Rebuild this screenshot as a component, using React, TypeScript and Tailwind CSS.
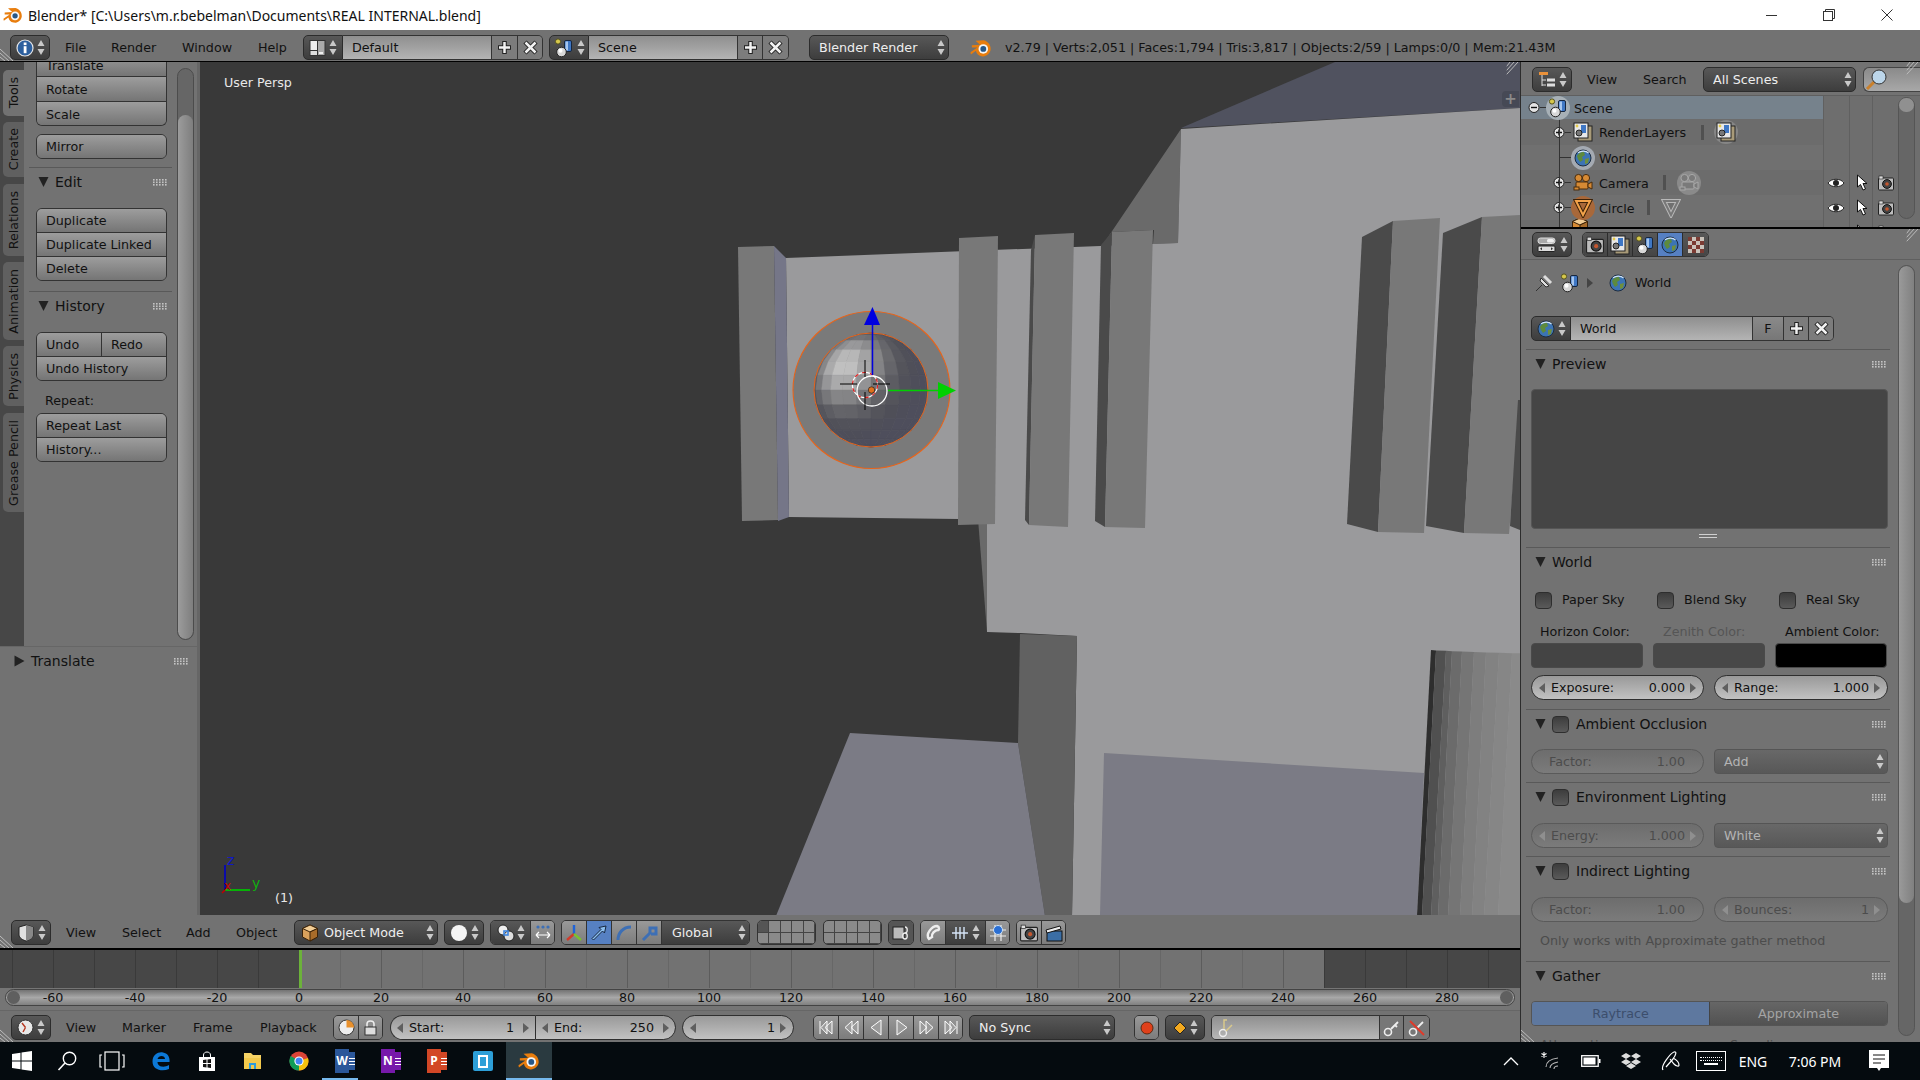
import React from 'react';

const UpDown = ({ c = '#c9c9c9' }: { c?: string }) => (
  <svg width="8" height="17" viewBox="0 0 8 17" className="shrink-0">
    <path d="M4 1L7.5 7H.5Z M4 16L.5 10H7.5Z" fill={c} />
  </svg>
);

const Tri = ({ open = true }: { open?: boolean }) => (
  <svg width="11" height="12" viewBox="0 0 11 12" className="shrink-0">
    {open ? <path d="M.5 1H10.5L5.5 11Z" fill="#222" /> : <path d="M.5 .5L10.5 6L.5 11.5Z" fill="#222" />}
  </svg>
);

const Grip = () => (
  <svg width="15" height="8" viewBox="0 0 15 8" className="shrink-0">
    {[0, 3, 6, 9, 12].map((x) =>
      [1, 3.5, 6].map((y) => <rect key={x + '-' + y} x={x} y={y} width="1.6" height="1.6" fill="#c4c4c4" />)
    )}
  </svg>
);

const Hatch = ({ className, flip }: { className: string; flip?: boolean }) => (
  <svg width="14" height="13" viewBox="0 0 14 13" className={className}>
    <g transform={flip ? 'translate(14 0) scale(-1 1)' : undefined} stroke="#bdbdbd" strokeWidth="1">
      <path d="M0 1L13 13M0 5L9 13M0 9L5 13" />
    </g>
  </svg>
);

const PlusIcon = () => (
  <svg width="17" height="17" viewBox="0 0 17 17">
    <path d="M8.5 2V15M2 8.5H15" stroke="#222" strokeWidth="4.5" />
    <path d="M8.5 3V14M3 8.5H14" stroke="#f2f2f2" strokeWidth="2.5" />
  </svg>
);

const XIcon = () => (
  <svg width="17" height="17" viewBox="0 0 17 17">
    <path d="M3 3L14 14M14 3L3 14" stroke="#222" strokeWidth="4.5" />
    <path d="M3.5 3.5L13.5 13.5M13.5 3.5L3.5 13.5" stroke="#f2f2f2" strokeWidth="2.5" />
  </svg>
);

const InfoIcon = () => (
  <svg width="18" height="18" viewBox="0 0 18 18">
    <circle cx="9" cy="9" r="8" fill="#2c5f9e" stroke="#e6e6e6" strokeWidth="1.2" />
    <rect x="7.7" y="3.5" width="2.8" height="2.6" fill="#fff" />
    <rect x="7.7" y="7.2" width="2.8" height="7" fill="#fff" />
  </svg>
);

const LayoutIcon = () => (
  <svg width="17" height="18" viewBox="0 0 17 18">
    <rect x=".5" y="1" width="16" height="16" fill="#333" />
    <rect x="1.5" y="2" width="6.5" height="9" fill="#eee" />
    <rect x="1.5" y="12" width="6.5" height="4" fill="#ddd" />
    <rect x="9" y="2" width="6.5" height="14" fill="#aaa" />
    <rect x="10" y="13" width="4" height="2" fill="#eee" />
  </svg>
);

const SceneIcon = () => (
  <svg width="20" height="20" viewBox="0 0 20 20">
    <circle cx="4" cy="3.5" r="2.6" fill="#d6c84c" stroke="#55521f" />
    <rect x="10.5" y="2.5" width="7" height="11" rx="1.5" fill="#3f77c4" stroke="#16263f" />
    <rect x="11.5" y="3.5" width="2.5" height="9" fill="#a6c6ee" />
    <circle cx="7.5" cy="14" r="4.8" fill="#d8d8d8" stroke="#222" />
    <circle cx="6.5" cy="12.8" r="2" fill="#fff" />
  </svg>
);

const WorldIcon = ({ s = 18 }: { s?: number }) => (
  <svg width={s} height={s} viewBox="0 0 18 18">
    <circle cx="9" cy="9" r="8" fill="#3c74b4" stroke="#1c2c40" />
    <path d="M3 7C5 3 8 3 10 3L11 6L8 8L9 11L6 13L4 10Z" fill="#5d8a3d" />
    <path d="M11 10L15 9L14 14L11 15Z" fill="#6f8f3e" />
    <path d="M4 3.8C7 1.5 12 1.5 14.5 4" stroke="#cfe2f5" strokeWidth="1.2" fill="none" />
  </svg>
);

const RenderLayersIcon = () => (
  <svg width="20" height="20" viewBox="0 0 20 20">
    <rect x="5" y="4" width="14" height="15" fill="#a89a78" stroke="#222" />
    <rect x="1" y="1" width="14" height="15" fill="#e8e8e8" stroke="#222" />
    <rect x="8" y="3" width="5" height="8" fill="#3f77c4" />
    <circle cx="6" cy="11" r="3" fill="#777" stroke="#222" />
    <circle cx="4" cy="4" r="1.4" fill="#e5c94a" />
  </svg>
);

const CameraDataIcon = ({ c = '#d68a34', d = '#4a2c0c' }: { c?: string; d?: string }) => (
  <svg width="20" height="20" viewBox="0 0 20 20">
    <circle cx="5.5" cy="5" r="3.6" fill={c} stroke={d} />
    <circle cx="13" cy="5" r="3.6" fill={c} stroke={d} />
    <rect x="3" y="9" width="12" height="7" rx="1" fill={c} stroke={d} />
    <path d="M15 11L19 9V16L15 14Z" fill={c} stroke={d} />
    <rect x="1" y="14" width="5" height="3" fill={c} stroke={d} />
  </svg>
);

const MeshIcon = ({ c = '#f2a24a', d = '#3d2208' }: { c?: string; d?: string }) => (
  <svg width="20" height="20" viewBox="0 0 20 20">
    <path d="M3 3H17L10 17Z" fill="none" stroke={d} strokeWidth="4" />
    <path d="M3 3H17L10 17Z" fill="none" stroke={c} strokeWidth="2" />
  </svg>
);

const EyeIcon = () => (
  <svg width="18" height="12" viewBox="0 0 18 12">
    <path d="M1 6C4 1 14 1 17 6C14 11 4 11 1 6Z" fill="#fff" stroke="#222" />
    <circle cx="9" cy="6" r="3" fill="#222" />
  </svg>
);

const CursorIcon = () => (
  <svg width="13" height="17" viewBox="0 0 13 17">
    <path d="M1.5 1V13L4.5 10.5L7 16L9.5 15L7 9.5H11Z" fill="#fff" stroke="#111" />
  </svg>
);

const RenderCamIcon = ({ s = 16 }: { s?: number }) => (
  <svg width={s} height={s} viewBox="0 0 16 16">
    <rect x=".5" y="3" width="15" height="12" rx="1" fill="#bdbdbd" stroke="#222" />
    <rect x="1" y="1" width="4" height="3" fill="#ddd" stroke="#222" strokeWidth=".6" />
    <circle cx="9" cy="9" r="4.4" fill="#444" stroke="#111" />
    <circle cx="9" cy="9" r="1.8" fill="#c5572f" />
  </svg>
);

const CubeIcon = ({ c = '#d9a15c', d = '#3a2208' }: { c?: string; d?: string }) => (
  <svg width="18" height="18" viewBox="0 0 18 18">
    <path d="M9 1L16.5 4.5V13L9 17L1.5 13V4.5Z" fill={c} stroke={d} />
    <path d="M1.5 4.5L9 8L16.5 4.5L9 1Z" fill="#f2cd95" stroke={d} />
    <path d="M9 8V17L16.5 13V4.5Z" fill="#a86c2a" stroke={d} />
  </svg>
);

const ViewCubeIcon = () => (
  <svg width="18" height="18" viewBox="0 0 18 18">
    <path d="M9 1L16 3V11C16 14 12 16 9 17C6 16 2 14 2 11V3Z" fill="#e0e0e0" stroke="#222" />
    <path d="M9 1V17C12 16 16 14 16 11V3Z" fill="#888" />
  </svg>
);

const OutlinerIcon = () => (
  <svg width="18" height="18" viewBox="0 0 18 18">
    <rect x="1" y="1" width="9" height="3" fill="#e9913a" />
    <path d="M4 4V15M4 9H8M4 14H8" stroke="#ddd" fill="none" />
    <rect x="9" y="7.5" width="8" height="3" fill="#ddd" />
    <rect x="9" y="12.5" width="8" height="3" fill="#ddd" />
  </svg>
);

const PropsIcon = () => (
  <svg width="20" height="18" viewBox="0 0 20 18">
    <rect x="1" y="2" width="17" height="5.5" rx="2.5" fill="#aaa" stroke="#ddd" />
    <rect x="10" y="3" width="7" height="3.5" rx="1.5" fill="#eee" />
    <rect x="1" y="10" width="17" height="5.5" rx="1" fill="#ddd" stroke="#222" />
    <path d="M3 12.7L5 11.2V14.2ZM16 12.7L14 11.2V14.2Z" fill="#333" />
  </svg>
);

const CheckerIcon = () => (
  <svg width="16" height="16" viewBox="0 0 16 16">
    <rect width="16" height="16" fill="#c9c2ba" />
    {[0, 1, 2, 3].map((r) =>
      [0, 1, 2, 3].map((c) =>
        (r + c) % 2 === 0 ? <rect key={r + '' + c} x={c * 4} y={r * 4} width="4" height="4" fill="#7b3b33" /> : null
      )
    )}
  </svg>
);

const ClockIcon = () => (
  <svg width="17" height="17" viewBox="0 0 17 17">
    <circle cx="8.5" cy="8.5" r="7.5" fill="#e8e8e8" stroke="#333" />
    <path d="M8.5 8.5L5 4M8.5 8.5L6 13" stroke="#b5361f" strokeWidth="1.4" />
  </svg>
);

const BlenderLogo = ({ s = 24 }: { s?: number }) => (
  <svg width={s} height={s} viewBox="0 0 24 24">
    <path d="M6 4L15 3.5C20 5 23 9 22.5 14C21.5 19 17 22 12.5 21C9 20.5 7 18 6.5 15L1 19L.5 16.5L8 11.5L2 11.5L2 9L11 8.5Z" fill="#e87d0d" />
    <circle cx="14.5" cy="13" r="5.2" fill="#f6f6f6" />
    <circle cx="14.5" cy="13" r="3.2" fill="#265787" />
  </svg>
);

const IconDrop = ({ children, round = 'rounded-[5px]' }: { children: React.ReactNode; round?: string }) => (
  <div className={'flex h-[25px] w-10 shrink-0 items-center justify-center gap-[3px] border border-[#2c2c2c] bg-linear-to-b from-[#585858] to-[#3d3d3d] ' + round}>
    {children}
    <UpDown />
  </div>
);

const TextDrop = ({ w, label, icon }: { w: string; label: string; icon?: React.ReactNode }) => (
  <div className={'flex h-[25px] shrink-0 items-center rounded-[5px] border border-[#2c2c2c] bg-linear-to-b from-[#585858] to-[#3d3d3d] pr-[3px] pl-[9px] text-[#eee] ' + w}>
    {icon}
    <span className="flex-1 truncate">{label}</span>
    <UpDown />
  </div>
);

const Menu = ({ w, label }: { w: string; label: string }) => (
  <div className={'h-[25px] shrink-0 leading-[25px] text-[#111] ' + w}>{label}</div>
);

const Cell = ({ children, w = 'w-[25px]', last }: { children?: React.ReactNode; w?: string; last?: boolean }) => (
  <div className={'flex h-full shrink-0 items-center justify-center bg-linear-to-b from-[#999] to-[#7c7c7c] ' + (last ? 'w-[23px]' : w + ' border-r border-[#333]')}>
    {children}
  </div>
);

const Group = ({ children, className = '' }: { children: React.ReactNode; className?: string }) => (
  <div className={'flex h-[25px] shrink-0 overflow-hidden rounded-[5px] border border-[#333] ' + className}>{children}</div>
);

const BtnStack = ({ rows, className = '' }: { rows: string[][]; className?: string }) => (
  <div className={'w-[131px] overflow-hidden rounded-[6px] border border-[#333] ' + className}>
    {rows.map((r, i) => (
      <div key={i} className={'flex ' + (i ? 'h-[24px] border-t border-[#333]' : 'h-[23px]')}>
        {r.map((t, j) => (
          <div key={t} className={'flex-1 bg-linear-to-b from-[#9d9d9d] to-[#757575] pl-[9px] leading-[23px] text-[#111] ' + (j ? 'border-l border-[#333]' : '')}>
            {t}
          </div>
        ))}
      </div>
    ))}
  </div>
);

const NumArrow = ({ left, c }: { left?: boolean; c: string }) => (
  <svg width="6" height="10" viewBox="0 0 6 10" className="shrink-0">
    <path d={left ? 'M6 0L0 5L6 10Z' : 'M0 0L6 5L0 10Z'} fill={c} />
  </svg>
);

const Num = ({ label, value, off, slider, w = 'w-[174px]' }: { label: string; value: string; off?: boolean; slider?: boolean; w?: string }) => (
  <div
    className={
      'flex h-[25px] shrink-0 items-center rounded-full border px-[7px] ' + w + ' ' +
      (off
        ? 'border-[#5a5a5a] bg-linear-to-b from-[#6d6d6d] to-[#7b7b7b] text-[#4c4c4c]'
        : 'border-[#2f2f2f] bg-linear-to-b from-[#999] to-[#c2c2c2] text-[#111]')
    }
  >
    {slider ? <span className="w-[6px]" /> : <NumArrow left c={off ? '#8f8f8f' : '#5f5f5f'} />}
    <span className={'flex-1 ' + (slider ? 'pl-[4px]' : 'pl-[6px]')}>{label}</span>
    <span className="pr-[5px]">{value}</span>
    {slider ? <span className="w-[6px]" /> : <NumArrow c={off ? '#8f8f8f' : '#5f5f5f'} />}
  </div>
);

const Check = () => (
  <div className="h-[17px] w-[17px] shrink-0 rounded-[4px] border border-[#2e2e2e] bg-linear-to-b from-[#3d3d3d] to-[#5a5a5a]" />
);

const PanelHead = ({ label, check }: { label: string; check?: boolean }) => (
  <div className="flex h-[28px] items-center pr-[8px] pl-[14px] text-[14px] text-[#111]">
    <Tri />
    {check ? <div className="ml-[6px] mr-[7px]"><Check /></div> : <span className="w-[6px]" />}
    <span className="flex-1">{label}</span>
    <Grip />
  </div>
);

const Line = ({ className = '' }: { className?: string }) => <div className={'mx-[5px] h-px bg-[#595959] ' + className} />;

function sphereFacets() {
  const out: { d: string; fill: string }[] = [];
  const n = 12;
  const L = [-0.46, -0.44, 0.77];
  const pt = (lat: number, lon: number) => [
    Math.cos(lat) * Math.sin(lon),
    Math.sin(lat),
    Math.cos(lat) * Math.cos(lon),
  ];
  for (let i = 0; i < n; i++) {
    for (let j = 0; j < n; j++) {
      const a0 = -Math.PI / 2 + (i * Math.PI) / n;
      const a1 = a0 + Math.PI / n;
      const b0 = -Math.PI / 2 + (j * Math.PI) / n;
      const b1 = b0 + Math.PI / n;
      const nn = pt((a0 + a1) / 2, (b0 + b1) / 2);
      const s = Math.max(0, nn[0] * L[0] + nn[1] * L[1] + nn[2] * L[2]);
      const g = Math.round(78 + 118 * Math.pow(s, 4));
      const fill = `rgb(${g},${g},${g + Math.round(14 * (1 - s))})`;
      const d =
        'M' +
        [pt(a0, b0), pt(a0, b1), pt(a1, b1), pt(a1, b0)]
          .map((p) => `${(871 + p[0] * 57).toFixed(1)} ${(390 + p[1] * 57).toFixed(1)}`)
          .join('L') +
        'Z';
      out.push({ d, fill });
    }
  }
  return out;
}

const FRONT = '#787878';
const SIDE = '#4a4a4a';
const LIT = '#9a9a9c';
const FLOOR = '#7b7b85';
const STRIPES = ['#2e2e2e', '#505050', '#5f5f5f', '#6b6b6b', '#757575', '#7d7d7d', '#828282', '#868686', '#8a8a8a'];
const STRIPE_TOP = [1431, 1436, 1446, 1452, 1462, 1474, 1486, 1499, 1512, 1534];
const STRIPE_BOT = [1417, 1422, 1431, 1438, 1448, 1460, 1472, 1484, 1498, 1520];

const Scene3D = () => (
  <svg width="1320" height="853" viewBox="200 62 1320 853" className="block">
    <rect x="200" y="62" width="1320" height="853" fill="#393939" />
    <polygon points="1335,62 1520,62 1520,108 1181,128" fill="#50525f" />
    <polygon points="1181,129 1178,243 1153,244 1154,230 1112,232 1102,246" fill="#6a6a6a" />
    <polygon points="978,519 987,519 987,632" fill="#6a6a6a" />
    <polygon points="1181,129 1520,108 1520,916 1072,916 1077,636 1020,633 987,632 987,520 959,519 789,517 786,258 1178,243" fill={LIT} />
    <polygon points="1020,634 1077,636 1072,916 1045,916 1018,743" fill="#616161" />
    <polygon points="850,733 1018,743 1045,916 776,916" fill={FLOOR} />
    <polygon points="1104,753 1424,773 1417,916 1100,916" fill={FLOOR} />
    {STRIPES.map((c, i) => (
      <polygon key={c} points={`${STRIPE_TOP[i]},${650 + i * 0.4} ${STRIPE_TOP[i + 1]},${650.4 + i * 0.4} ${STRIPE_BOT[i + 1]},916 ${STRIPE_BOT[i]},916`} fill={c} />
    ))}
    <polygon points="738,247 774,246 778,520 742,521" fill={FRONT} />
    <polygon points="774,246 786,258 789,517 778,521" fill="#757688" />
    <polygon points="959,238 998,236 995,524 958,525" fill={FRONT} />
    <polygon points="1035,235 1031,250 1025,520 1029,525" fill={SIDE} />
    <polygon points="1035,235 1074,233 1068,527 1029,525" fill={FRONT} />
    <polygon points="1112,232 1101,245 1095,521 1105,527" fill={SIDE} />
    <polygon points="1112,232 1153,230 1145,528 1105,527" fill={FRONT} />
    <polygon points="1393,221 1362,237 1347,524 1378,532" fill={SIDE} />
    <polygon points="1393,221 1440,218 1424,533 1378,532" fill={FRONT} />
    <polygon points="1482,217 1443,233 1426,526 1464,533" fill={SIDE} />
    <polygon points="1482,217 1520,215 1520,400 1509,534 1464,533" fill={FRONT} />
    <polygon points="1518,400 1520,400 1520,530 1510,526" fill={SIDE} />

    <circle cx="871.5" cy="390" r="78.5" fill="#7a7a7a" stroke="#e8641a" strokeWidth="1.1" />
    {sphereFacets().map((f, i) => (
      <path key={i} d={f.d} fill={f.fill} stroke={f.fill} strokeWidth=".4" />
    ))}
    <circle cx="871" cy="390" r="57" fill="none" stroke="#e8641a" strokeWidth="1" />
    <circle cx="865" cy="385" r="12.6" fill="none" stroke="#fff" strokeWidth="1.2" />
    <circle cx="865" cy="385" r="12.6" fill="none" stroke="#e02020" strokeWidth="1.2" strokeDasharray="4 4" />
    <circle cx="872" cy="391" r="15" fill="none" stroke="#fff" strokeWidth="1.3" />
    <path d="M840 384H857M873 384H890M865 360V377M865 392V410" stroke="#000" strokeWidth="1" />
    <path d="M872.5 375V322" stroke="#0000e0" strokeWidth="1.5" />
    <polygon points="872.5,307 880,325 864,325" fill="#0000e0" />
    <path d="M888 390.5H938" stroke="#00d000" strokeWidth="1.5" />
    <polygon points="956,390.5 938,382 938,399" fill="#00d000" />
    <circle cx="871.5" cy="390" r="3.2" fill="#e0701c" stroke="#222" strokeWidth=".7" />

    <path d="M225 890V865" stroke="#0000c8" strokeWidth="1.6" />
    <path d="M225 890H250" stroke="#00c000" strokeWidth="1.8" />
    <path d="M225 890L222 893" stroke="#c00000" strokeWidth="1.6" />
    <text x="227" y="865" fontSize="14" fill="#1018c8" fontFamily="DejaVu Sans">z</text>
    <text x="252" y="888" fontSize="14" fill="#10b010" fontFamily="DejaVu Sans">y</text>
    <text x="224" y="890" fontSize="12" fill="#c80000" fontFamily="DejaVu Sans">x</text>
  </svg>
);

const ShelfTab = ({ label, h, mt, active }: { label: string; h: string; mt: string; active?: boolean }) => (
  <div className={'ml-[3px] flex w-[21px] items-center justify-center rounded-l-[5px] text-[#111] ' + h + ' ' + mt + ' ' + (active ? 'bg-[#727272]' : 'bg-[#606060]')}>
    <span className="rotate-180 whitespace-nowrap [writing-mode:vertical-rl]">{label}</span>
  </div>
);

const ToolShelf = () => (
  <aside className="flex w-[200px] shrink-0 flex-col border-r-[3px] border-[#666] bg-[#727272]">
    <div className="flex h-[584px] shrink-0">
      <div className="flex w-[24px] shrink-0 flex-col bg-[#474747] pt-[8px]">
        <ShelfTab label="Tools" h="h-[46px]" mt="" active />
        <ShelfTab label="Create" h="h-[55px]" mt="mt-[6px]" />
        <ShelfTab label="Relations" h="h-[72px]" mt="mt-[7px]" />
        <ShelfTab label="Animation" h="h-[78px]" mt="mt-[6px]" />
        <ShelfTab label="Physics" h="h-[60px]" mt="mt-[6px]" />
        <ShelfTab label="Grease Pencil" h="h-[99px]" mt="mt-[7px]" />
      </div>
      <div className="w-[153px] shrink-0 overflow-hidden">
        <div className="ml-[12px] w-[131px] overflow-hidden rounded-b-[6px] border-x border-b border-[#333]">
          <div className="h-[15px] overflow-hidden border-b border-[#333] bg-linear-to-b from-[#8d8d8d] to-[#757575] pl-[9px] text-[#111]">
            <div className="-mt-[5px] leading-[18px]">Translate</div>
          </div>
          <div className="h-[25px] border-b border-[#333] bg-linear-to-b from-[#9d9d9d] to-[#757575] pl-[9px] leading-[26px] text-[#111]">Rotate</div>
          <div className="h-[23px] bg-linear-to-b from-[#9d9d9d] to-[#757575] pl-[9px] leading-[25px] text-[#111]">Scale</div>
        </div>
        <BtnStack className="mt-[8px] ml-[12px]" rows={[['Mirror']]} />
        <Line className="mt-[8px]" />
        <div className="flex h-[28px] items-center pr-[9px] pl-[14px] text-[14px] text-[#111]">
          <Tri />
          <span className="flex-1 pl-[6px]">Edit</span>
          <Grip />
        </div>
        <BtnStack className="mt-[12px] ml-[12px]" rows={[['Duplicate'], ['Duplicate Linked'], ['Delete']]} />
        <Line className="mt-[10px]" />
        <div className="flex h-[28px] items-center pr-[9px] pl-[14px] text-[14px] text-[#111]">
          <Tri />
          <span className="flex-1 pl-[6px]">History</span>
          <Grip />
        </div>
        <BtnStack className="mt-[12px] ml-[12px]" rows={[['Undo', 'Redo'], ['Undo History']]} />
        <div className="mt-[11px] h-[18px] pl-[21px] leading-[18px] text-[#111]">Repeat:</div>
        <BtnStack className="mt-[3px] ml-[12px]" rows={[['Repeat Last'], ['History...']]} />
      </div>
      <div className="w-[17px] shrink-0 pt-[6px]">
        <div className="flex h-[572px] flex-col overflow-hidden rounded-full border border-[#4c4c4c] bg-[#666]">
          <div className="mt-[46px] flex-1 rounded-full bg-linear-to-r from-[#9c9c9c] to-[#7e7e7e]" />
        </div>
      </div>
    </div>
    <div className="flex flex-1 items-start border-t border-[#666] pt-[4px] pr-[8px] pl-[14px] text-[14px] text-[#111]">
      <div className="flex h-[20px] w-full items-center">
        <Tri open={false} />
        <span className="flex-1 pl-[6px]">Translate</span>
        <Grip />
      </div>
    </div>
  </aside>
);

const FRAMES = Array.from({ length: 37 }, (_, i) => -70 + i * 10);
const LABELS = Array.from({ length: 18 }, (_, i) => -60 + i * 20);

const Timeline = () => (
  <div className="h-[62px] shrink-0 border-t-2 border-black bg-[#757575]">
    <div className="flex h-[38px] overflow-hidden">
      <div className="w-[12px] shrink-0 bg-[#474747]" />
      {FRAMES.map((f) => {
        const dark = f < 0 || f >= 250;
        return (
          <div
            key={f}
            className={
              'w-[41px] shrink-0 ' +
              (f === 0
                ? 'border-l-[3px] border-[#6cb23a] bg-[#727272]'
                : dark
                  ? 'border-l border-[#3a3a3a] bg-[#474747]'
                  : f % 20 === 0
                    ? 'border-l border-[#5c5c5c] bg-[#727272]'
                    : 'border-l border-[#676767] bg-[#727272]')
            }
          />
        );
      })}
    </div>
    <div className="relative mx-[5px] mt-[1px] flex h-[17px] items-center overflow-hidden rounded-full border border-[#444] bg-linear-to-b from-[#737373] via-[#a8a8a8] to-[#808080] pl-[6px] text-[#111]">
      <div className="absolute top-[1px] left-[1px] h-[13px] w-[13px] rounded-full bg-[#5f5f5f]" />
      {LABELS.map((l) => (
        <div key={l} className="w-[82px] shrink-0 text-center leading-[15px]">
          {l}
        </div>
      ))}
      <div className="ml-auto mr-[1px] h-[13px] w-[13px] shrink-0 rounded-full bg-[#5f5f5f]" />
    </div>
  </div>
);

const View3DHeader = () => (
  <div className="relative flex h-[33px] shrink-0 items-start bg-[#727272] pt-[5px] pl-[11px]">
    <Hatch className="absolute bottom-0 left-0" />
    <IconDrop><ViewCubeIcon /></IconDrop>
    <Menu w="ml-[15px] w-[56px]" label="View" />
    <Menu w="w-[64px]" label="Select" />
    <Menu w="w-[50px]" label="Add" />
    <Menu w="w-[58px]" label="Object" />
    <TextDrop w="w-[144px] !pl-[6px]" label="Object Mode" icon={<span className="mr-[5px]"><CubeIcon /></span>} />
    <div className="ml-[6px]"><IconDrop><svg width="18" height="18" viewBox="0 0 18 18"><circle cx="9" cy="9" r="8" fill="#f4f4f4" /></svg></IconDrop></div>
    <Group className="ml-[6px]">
      <div className="flex w-[40px] items-center justify-center gap-[2px] border-r border-[#333] bg-linear-to-b from-[#585858] to-[#3d3d3d]">
        <svg width="18" height="18" viewBox="0 0 18 18">
          <circle cx="6" cy="6" r="5" fill="#eee" stroke="#222" />
          <circle cx="12" cy="12" r="5" fill="#ddd" stroke="#222" />
          <rect x="7" y="7" width="4" height="4" fill="none" stroke="#3f86e0" strokeWidth="1.6" />
        </svg>
        <UpDown />
      </div>
      <Cell last>
        <svg width="20" height="18" viewBox="0 0 20 18">
          <path d="M3 11H17M3 11L6 8M3 11L6 14M17 11L14 8M17 11L14 14" stroke="#fff" fill="none" strokeWidth="1.2" />
          <circle cx="5" cy="3" r="1.6" fill="#3d6fb5" /><circle cx="10" cy="3" r="1.6" fill="#3d6fb5" /><circle cx="15" cy="3" r="1.6" fill="#3d6fb5" />
        </svg>
      </Cell>
    </Group>
    <div className="ml-[6px] flex h-[25px] shrink-0 overflow-hidden rounded-[5px] border border-[#333]">
      <Cell>
        <svg width="20" height="20" viewBox="0 0 20 20">
          <path d="M10 2V11" stroke="#1f63d8" strokeWidth="2.4" />
          <path d="M10 11L3 17" stroke="#d13a2a" strokeWidth="2.4" />
          <path d="M10 11L17 17" stroke="#7ac12f" strokeWidth="2.4" />
        </svg>
      </Cell>
      <div className="flex w-[25px] items-center justify-center border-r border-[#333] bg-[#5680c2]">
        <svg width="18" height="18" viewBox="0 0 18 18">
          <path d="M16 2L9 3.5L11 5.5L2 14.5L3.5 16L12.5 7L14.5 9Z" fill="#8dc0f0" stroke="#16263f" />
        </svg>
      </div>
      <Cell>
        <svg width="18" height="18" viewBox="0 0 18 18"><path d="M3 16C3 9 8 3 16 3" stroke="#3d6fb5" strokeWidth="3" fill="none" /></svg>
      </Cell>
      <Cell>
        <svg width="18" height="18" viewBox="0 0 18 18"><path d="M3 16L10 9V4H16V10H11" stroke="#3d6fb5" strokeWidth="3" fill="none" /></svg>
      </Cell>
      <div className="flex w-[87px] items-center bg-linear-to-b from-[#585858] to-[#3d3d3d] pr-[3px] pl-[10px] text-[#eee]">
        <span className="flex-1">Global</span>
        <UpDown />
      </div>
    </div>
    <div className="ml-[7px] grid h-[25px] w-[59px] shrink-0 grid-cols-5 grid-rows-2 overflow-hidden rounded-[5px] border border-[#333] bg-[#8a8a8a]">
      {Array.from({ length: 10 }, (_, i) => <div key={i} className={'border-r border-b border-[#444] ' + (i === 0 ? 'bg-[#555]' : '')} />)}
    </div>
    <div className="ml-[7px] grid h-[25px] w-[59px] shrink-0 grid-cols-5 grid-rows-2 overflow-hidden rounded-[5px] border border-[#333] bg-[#8a8a8a]">
      {Array.from({ length: 10 }, (_, i) => <div key={i} className="border-r border-b border-[#444]" />)}
    </div>
    <Group className="ml-[6px] w-[26px]">
      <div className="flex w-full items-center justify-center bg-[#555]">
        <svg width="18" height="18" viewBox="0 0 18 18">
          <rect x="1" y="3" width="11" height="12" fill="#bbb" stroke="#222" />
          <path d="M13 3C16 3 16 9 13 9C10 9 10 15 13 15C16 15 16 9 13 9" stroke="#eee" fill="none" strokeWidth="1.3" />
        </svg>
      </div>
    </Group>
    <Group className="ml-[6px]">
      <Cell>
        <svg width="18" height="18" viewBox="0 0 18 18"><path d="M5 15C1 10 8 2 13 2C16 3 15 6 14 6C11 6 7 10 8 13Z" fill="none" stroke="#eee" strokeWidth="2.4" /></svg>
      </Cell>
      <div className="flex w-[40px] items-center justify-center gap-[3px] border-r border-[#333] bg-linear-to-b from-[#585858] to-[#3d3d3d]">
        <svg width="18" height="14" viewBox="0 0 18 14"><path d="M1 7H17M5 1V13M9 1V13M13 1V13" stroke="#d5e4f7" strokeWidth="1.4" /></svg>
        <UpDown />
      </div>
      <Cell last>
        <svg width="18" height="18" viewBox="0 0 18 18">
          <path d="M1 12H17M1 6H17M6 1V17M12 1V17" stroke="#eee" strokeWidth="1.2" />
          <circle cx="9" cy="6" r="4.5" fill="#2a6fd4" stroke="#cfe2f5" />
        </svg>
      </Cell>
    </Group>
    <Group className="ml-[6px]">
      <Cell><RenderCamIcon s={18} /></Cell>
      <Cell last>
        <svg width="18" height="18" viewBox="0 0 18 18">
          <rect x="2" y="7" width="15" height="10" fill="#3b6ea5" stroke="#111" />
          <path d="M1 6L15 2L16 5L2 9Z" fill="#eee" stroke="#111" />
        </svg>
      </Cell>
    </Group>
  </div>
);

const Transport = ({ d }: { d: string }) => (
  <svg width="17" height="17" viewBox="0 0 17 17"><path d={d} fill="#9c9c9c" stroke="#fff" strokeWidth="1" /></svg>
);

const TimelineHeader = () => (
  <div className="relative flex h-[32px] shrink-0 items-start border-t border-[#666] bg-[#727272] pt-[4px] pl-[11px]">
    <Hatch className="absolute bottom-0 left-0" />
    <IconDrop><ClockIcon /></IconDrop>
    <Menu w="ml-[15px] w-[56px]" label="View" />
    <Menu w="w-[71px]" label="Marker" />
    <Menu w="w-[67px]" label="Frame" />
    <Menu w="w-[73px]" label="Playback" />
    <Group>
      <Cell>
        <svg width="17" height="17" viewBox="0 0 17 17">
          <circle cx="8.5" cy="8.5" r="7.5" fill="#eee" stroke="#333" />
          <path d="M8.5 8.5V1A7.5 7.5 0 0 1 16 8.5Z" fill="#e8902c" />
        </svg>
      </Cell>
      <Cell last>
        <svg width="15" height="17" viewBox="0 0 15 17">
          <path d="M4 8V5C4 1 11 1 11 5V8" fill="none" stroke="#eee" strokeWidth="1.6" />
          <rect x="2" y="8" width="11" height="8" fill="#ddd" stroke="#333" />
        </svg>
      </Cell>
    </Group>
    <div className="ml-[7px] flex h-[25px] w-[145px] shrink-0 items-center rounded-l-full border border-r-0 border-[#2f2f2f] bg-linear-to-b from-[#999] to-[#c2c2c2] pl-[6px] pr-[6px] text-[#111]">
      <NumArrow left c="#5f5f5f" />
      <span className="flex-1 pl-[6px]">Start:</span>
      <span className="pr-[9px]">1</span>
      <NumArrow c="#5f5f5f" />
    </div>
    <div className="flex h-[25px] w-[141px] shrink-0 items-center rounded-r-full border border-[#2f2f2f] bg-linear-to-b from-[#999] to-[#c2c2c2] pl-[6px] pr-[6px] text-[#111]">
      <NumArrow left c="#5f5f5f" />
      <span className="flex-1 pl-[6px]">End:</span>
      <span className="pr-[9px]">250</span>
      <NumArrow c="#5f5f5f" />
    </div>
    <div className="ml-[6px]"><Num label="" value="1" w="w-[112px]" /></div>
    <Group className="ml-[19px]">
      <Cell><Transport d="M2 2V15M14 2L7 8.5L14 15ZM9 2L3 8.5L9 15Z" /></Cell>
      <Cell><Transport d="M9 2L2 8.5L9 15ZM15 2L8 8.5L15 15Z" /></Cell>
      <Cell><Transport d="M13 1L3 8.5L13 16Z" /></Cell>
      <Cell><Transport d="M4 1L14 8.5L4 16Z" /></Cell>
      <Cell><Transport d="M2 2L9 8.5L2 15ZM8 2L15 8.5L8 15Z" /></Cell>
      <Cell last><Transport d="M15 2V15M3 2L10 8.5L3 15ZM8 2L14 8.5L8 15Z" /></Cell>
    </Group>
    <TextDrop w="ml-[6px] w-[146px]" label="No Sync" />
    <Group className="ml-[19px]">
      <Cell last>
        <svg width="14" height="14" viewBox="0 0 14 14"><circle cx="7" cy="7" r="6" fill="#e0401a" stroke="#5a2a12" /></svg>
      </Cell>
    </Group>
    <div className="ml-[6px]">
      <IconDrop>
        <svg width="14" height="14" viewBox="0 0 14 14"><path d="M7 1L13 7L7 13L1 7Z" fill="#f2a91f" stroke="#222" /></svg>
      </IconDrop>
    </div>
    <div className="ml-[6px] flex h-[25px] w-[219px] shrink-0 overflow-hidden rounded-[5px] border border-[#333]">
      <div className="flex-1 bg-linear-to-b from-[#8f8f8f] to-[#b8b8b8] pl-[6px]">
        <svg width="20" height="22" viewBox="0 0 20 22" className="mt-[1px]">
          <circle cx="5" cy="16" r="3.5" fill="none" stroke="#eee" strokeWidth="1.4" />
          <path d="M8 14L14 8M6 12V3H9" stroke="#d9c98b" strokeWidth="1.5" fill="none" />
        </svg>
      </div>
      <div className="flex w-[25px] items-center justify-center border-x border-[#333] bg-[#777]">
        <svg width="18" height="18" viewBox="0 0 18 18">
          <circle cx="5" cy="13" r="3.5" fill="none" stroke="#eee" strokeWidth="1.6" />
          <path d="M8 10L15 3M12 6L14 8" stroke="#eee" strokeWidth="1.8" />
        </svg>
      </div>
      <div className="flex w-[25px] items-center justify-center bg-[#777]">
        <svg width="18" height="18" viewBox="0 0 18 18">
          <circle cx="5" cy="13" r="3.5" fill="none" stroke="#eee" strokeWidth="1.6" />
          <path d="M8 10L15 3" stroke="#eee" strokeWidth="1.8" />
          <path d="M2 2L16 16" stroke="#e03a2a" strokeWidth="2" />
        </svg>
      </div>
    </div>
  </div>
);

const Restrict = ({ on }: { on?: boolean }) => (
  <div className="flex w-[72px] shrink-0 border-l border-[#606060]">
    <div className="flex w-[26px] items-center justify-center border-r border-[#606060]">{on && <EyeIcon />}</div>
    <div className="flex w-[24px] items-center justify-center border-r border-[#606060] pl-[3px]">{on && <CursorIcon />}</div>
    <div className="flex w-[22px] items-center justify-center pl-[3px]">{on && <RenderCamIcon />}</div>
  </div>
);

const Expander = ({ x, minus, tail }: { x: number; minus?: boolean; tail: number }) => (
  <svg width={tail} height="25" viewBox={`0 0 ${tail} 25`} className="shrink-0">
    <path d={`M${x + 6} 12.5H${tail}`} stroke="#333" />
    <circle cx={x} cy="12.5" r="5" fill="#e4e4e4" stroke="#222" />
    <path d={`M${x - 3} 12.5H${x + 3}${minus ? '' : `M${x} 9.5V15.5`}`} stroke="#111" strokeWidth="1.4" />
  </svg>
);

const TreeRow = ({ h, bg, children, on }: { h: string; bg: string; children: React.ReactNode; on?: boolean }) => (
  <div className={'flex shrink-0 ' + h}>
    <div className={'relative flex w-[302px] shrink-0 items-center text-[#111] ' + bg}>{children}</div>
    <Restrict on={on} />
  </div>
);

const Halo = ({ c, children }: { c: string; children: React.ReactNode }) => (
  <div className={'z-10 flex h-[24px] w-[24px] shrink-0 items-center justify-center rounded-full ' + c}>{children}</div>
);

const Sep = () => <span className="h-[15px] w-[3px] shrink-0 bg-[#505050]" />;

const Outliner = () => (
  <div className="relative h-[165px] shrink-0 overflow-hidden bg-[#6e6e6e]">
    <Hatch className="absolute top-0 right-0 rotate-90" />
    <div className="flex h-[34px] items-start border-b border-[#5f5f5f] bg-[#727272] pt-[5px] pl-[11px]">
      <IconDrop><OutlinerIcon /></IconDrop>
      <Menu w="ml-[15px] w-[56px]" label="View" />
      <Menu w="w-[60px]" label="Search" />
      <TextDrop w="w-[153px]" label="All Scenes" />
      <div className="ml-[7px] flex h-[25px] flex-1 items-center rounded-l-[6px] border border-r-0 border-[#444] bg-linear-to-b from-[#8a8a8a] to-[#a8a8a8]">
        <svg width="24" height="22" viewBox="0 0 24 22">
          <path d="M3 20L11 12" stroke="#c9802c" strokeWidth="3" />
          <circle cx="15" cy="8" r="7" fill="#bcd6ea" stroke="#333" />
        </svg>
      </div>
    </div>
    <div className="flex">
      <div className="relative w-[374px] shrink-0">
        <TreeRow h="h-[23px]" bg="bg-[#76828c]">
          <Expander x={13} minus tail={25} />
          <Halo c="bg-[#a7b0b6]"><SceneIcon /></Halo>
          <span className="ml-[4px] pt-[2px]">Scene</span>
        </TreeRow>
        <TreeRow h="h-[26px]" bg="bg-[#6c6c6c]">
          <span className="w-[25px] shrink-0" />
          <Expander x={13} tail={25} />
          <Halo c=""><RenderLayersIcon /></Halo>
          <span className="ml-[4px] w-[102px] pt-[2px]">RenderLayers</span>
          <Sep />
          <span className="w-[10px]" />
          <Halo c="bg-[#868686]"><RenderLayersIcon /></Halo>
        </TreeRow>
        <TreeRow h="h-[25px]" bg="bg-[#707070]">
          <span className="w-[38px] shrink-0" />
          <span className="h-px w-[12px] shrink-0 bg-[#333]" />
          <Halo c="bg-[#a4aab2]"><WorldIcon /></Halo>
          <span className="ml-[4px] pt-[2px]">World</span>
        </TreeRow>
        <TreeRow h="h-[25px]" bg="bg-[#6c6c6c]" on>
          <span className="w-[25px] shrink-0" />
          <Expander x={13} tail={25} />
          <Halo c=""><CameraDataIcon /></Halo>
          <span className="ml-[4px] w-[64px] pt-[2px]">Camera</span>
          <Sep />
          <span className="w-[11px]" />
          <Halo c="bg-[#8a8a8a]"><CameraDataIcon c="#7a7a7a" d="#a8a8a8" /></Halo>
        </TreeRow>
        <TreeRow h="h-[25px]" bg="bg-[#707070]" on>
          <span className="w-[25px] shrink-0" />
          <Expander x={13} tail={25} />
          <Halo c="bg-[#a8683a]"><MeshIcon /></Halo>
          <span className="ml-[4px] w-[48px] pt-[2px]">Circle</span>
          <Sep />
          <span className="w-[11px]" />
          <MeshIcon c="#777" d="#b8b8b8" />
        </TreeRow>
        <TreeRow h="h-[25px]" bg="bg-[#6c6c6c]" on>
          <span className="w-[50px] shrink-0" />
          <div className="-mt-[14px]"><CubeIcon c="#d68a34" /></div>
        </TreeRow>
        <div className="absolute top-[18px] bottom-0 left-[38px] w-px bg-[#333]" />
      </div>
      <div className="ml-[3px] mt-[1px] h-[122px] w-[17px] shrink-0 rounded-full border border-[#555] bg-[#666]">
        <div className="h-[14px] rounded-full bg-[#909090]" />
      </div>
    </div>
  </div>
);

const PropTab = ({ children, active, last }: { children: React.ReactNode; active?: boolean; last?: boolean }) => (
  <div className={'flex w-[25px] items-center justify-center ' + (last ? '' : 'border-r border-[#2c2c2c] ') + (active ? 'bg-[#5680c2]' : 'bg-linear-to-b from-[#585858] to-[#454545]')}>
    {children}
  </div>
);

const Swatch = ({ c }: { c: string }) => <div className={'h-[25px] w-[112px] rounded-[4px] border border-[#4a4a4a] ' + c} />;

const Properties = () => (
  <div className="relative flex min-h-0 flex-1 flex-col overflow-hidden border-t-2 border-black bg-[#727272]">
    <Hatch className="absolute top-0 right-0 rotate-90" />
    <Hatch className="absolute bottom-0 left-0" />
    <div className="flex h-[31px] shrink-0 items-start border-b border-[#5f5f5f] pt-[3px] pl-[11px]">
      <IconDrop><PropsIcon /></IconDrop>
      <Group className="ml-[10px]">
        <PropTab><RenderCamIcon s={18} /></PropTab>
        <PropTab><RenderLayersIcon /></PropTab>
        <PropTab><SceneIcon /></PropTab>
        <PropTab active><WorldIcon /></PropTab>
        <PropTab last><CheckerIcon /></PropTab>
      </Group>
    </div>
    <div className="flex min-h-0 flex-1">
      <div className="w-[374px] shrink-0 overflow-hidden">
        <div className="flex h-[56px] items-center pb-[10px] pl-[13px] text-[#111]">
          <svg width="19" height="19" viewBox="0 0 19 19">
            <path d="M2 17L8 11M7 4L15 12L12 13L6 7Z" fill="#ddd" stroke="#333" />
            <path d="M10 2L17 9" stroke="#ddd" strokeWidth="3" />
          </svg>
          <span className="w-[7px]" />
          <SceneIcon />
          <svg width="6" height="10" viewBox="0 0 6 10" className="ml-[7px]"><path d="M0 0L6 5L0 10Z" fill="#444" /></svg>
          <span className="ml-[16px]"><WorldIcon /></span>
          <span className="ml-[8px]">World</span>
        </div>
        <div className="flex pl-[10px]">
          <IconDrop round="rounded-l-[5px]"><WorldIcon /></IconDrop>
          <div className="flex h-[25px] overflow-hidden rounded-r-[5px] border border-l-0 border-[#333] text-[#111]">
            <div className="w-[181px] bg-linear-to-b from-[#8f8f8f] to-[#b4b4b4] pl-[9px] leading-[23px]">World</div>
            <div className="w-[31px] border-l border-[#333] bg-linear-to-b from-[#8a8a8a] to-[#777] text-center leading-[23px]">F</div>
            <div className="flex w-[25px] items-center justify-center border-l border-[#333] bg-[#7c7c7c]"><PlusIcon /></div>
            <div className="flex w-[25px] items-center justify-center border-l border-[#333] bg-[#7c7c7c]"><XIcon /></div>
          </div>
        </div>
        <Line className="mt-[8px]" />
        <PanelHead label="Preview" />
        <div className="mt-[11px] ml-[10px] h-[140px] w-[357px] rounded-[4px] border border-[#555] bg-[#454545]" />
        <div className="mx-auto mt-[5px] h-[4px] w-[18px] border-y border-[#d0d0d0]" />
        <Line className="mt-[9px]" />
        <PanelHead label="World" />
        <div className="mt-[15px] flex h-[18px] items-center pl-[14px] text-[#111]">
          <div className="flex w-[122px] items-center gap-[10px]"><Check /><span>Paper Sky</span></div>
          <div className="flex w-[122px] items-center gap-[10px]"><Check /><span>Blend Sky</span></div>
          <div className="flex items-center gap-[10px]"><Check /><span>Real Sky</span></div>
        </div>
        <div className="mt-[15px] flex h-[16px] pl-[19px] leading-[16px] text-[#111]">
          <span className="w-[123px]">Horizon Color:</span>
          <span className="w-[122px] text-[#555]">Zenith Color:</span>
          <span>Ambient Color:</span>
        </div>
        <div className="mt-[3px] flex gap-[10px] pl-[10px]">
          <Swatch c="bg-[#444]" />
          <Swatch c="bg-[#484848]" />
          <Swatch c="bg-[#000]" />
        </div>
        <div className="mt-[7px] flex gap-[10px] pl-[10px]">
          <Num label="Exposure:" value="0.000" w="w-[173px]" />
          <Num label="Range:" value="1.000" />
        </div>
        <Line className="mt-[9px]" />
        <PanelHead label="Ambient Occlusion" check />
        <div className="mt-[11px] flex gap-[10px] pl-[10px]">
          <Num label="Factor:" value="1.00" off slider w="w-[173px]" />
          <div className="flex h-[25px] w-[174px] items-center rounded-[4px] border border-[#555] bg-linear-to-b from-[#686868] to-[#585858] pr-[3px] pl-[9px] text-[#b4b4b4]">
            <span className="flex-1">Add</span><UpDown />
          </div>
        </div>
        <Line className="mt-[8px]" />
        <PanelHead label="Environment Lighting" check />
        <div className="mt-[12px] flex gap-[10px] pl-[10px]">
          <Num label="Energy:" value="1.000" off w="w-[173px]" />
          <div className="flex h-[25px] w-[174px] items-center rounded-[4px] border border-[#555] bg-linear-to-b from-[#686868] to-[#585858] pr-[3px] pl-[9px] text-[#b4b4b4]">
            <span className="flex-1">White</span><UpDown />
          </div>
        </div>
        <Line className="mt-[8px]" />
        <PanelHead label="Indirect Lighting" check />
        <div className="mt-[12px] flex gap-[10px] pl-[10px]">
          <Num label="Factor:" value="1.00" off slider w="w-[173px]" />
          <Num label="Bounces:" value="1" off />
        </div>
        <div className="mt-[11px] h-[16px] pl-[19px] leading-[16px] text-[#4c4c4c]">Only works with Approximate gather method</div>
        <Line className="mt-[12px]" />
        <PanelHead label="Gather" />
        <div className="mt-[11px] ml-[10px] flex h-[25px] w-[357px] overflow-hidden rounded-[4px] border border-[#555]">
          <div className="w-[177px] bg-[#5e789f] text-center leading-[23px] text-[#3c4e6c]">Raytrace</div>
          <div className="flex-1 border-l border-[#444] bg-linear-to-b from-[#666] to-[#525252] text-center leading-[23px] text-[#a4a4a4]">Approximate</div>
        </div>
        <div className="mt-[9px] flex pl-[19px] text-[#4c4c4c]">
          <span className="w-[190px]">Attenuation:</span>
          <span>Sampling:</span>
        </div>
      </div>
      <div className="ml-[3px] mt-[5px] h-[771px] w-[17px] shrink-0 overflow-hidden rounded-full border border-[#555] bg-[#666]">
        <div className="h-[637px] rounded-full bg-linear-to-r from-[#9a9a9a] to-[#808080]" />
      </div>
    </div>
  </div>
);

const TaskCell = ({ children, w = 'w-[46px]', className = '' }: { children: React.ReactNode; w?: string; className?: string }) => (
  <div className={'relative flex h-full shrink-0 items-center justify-center ' + w + ' ' + className}>{children}</div>
);

const AppTile = ({ bg, letter }: { bg: string; letter: string }) => (
  <div className="flex h-[24px] w-[20px] items-center">
    <div className={'flex h-full w-[14px] items-center justify-center text-[12px] font-bold leading-none text-white ' + bg}>{letter}</div>
    <div className={'flex h-[18px] w-[6px] flex-col justify-center gap-[2px] ' + bg}>
      <span className="h-[1px] w-full bg-white" />
      <span className="h-[1px] w-full bg-white" />
      <span className="h-[1px] w-full bg-white" />
    </div>
  </div>
);

const Taskbar = () => (
  <div className="flex h-[38px] shrink-0 bg-[#050b0f] [font-family:'Noto_Sans',sans-serif] text-white">
    <TaskCell w="w-[44px]">
      <svg width="20" height="20" viewBox="0 0 20 20"><path d="M0 3L8.5 1.8V9.5H0ZM9.5 1.6L20 0V9.5H9.5ZM0 10.5H8.5V18.2L0 17ZM9.5 10.5H20V20L9.5 18.4Z" fill="#fff" /></svg>
    </TaskCell>
    <TaskCell>
      <svg width="20" height="20" viewBox="0 0 20 20"><circle cx="12.5" cy="7.5" r="6.2" fill="none" stroke="#fff" strokeWidth="1.4" /><path d="M8 12L1.5 19" stroke="#fff" strokeWidth="1.6" /></svg>
    </TaskCell>
    <TaskCell w="w-[44px]">
      <svg width="26" height="20" viewBox="0 0 26 20" fill="none" stroke="#fff" strokeWidth="1.2"><rect x="6" y="1" width="14" height="18" /><path d="M3 4H1V16H3M23 4H25V16H23" /></svg>
    </TaskCell>
    <TaskCell className="ml-[4px]">
      <svg width="20" height="20" viewBox="0 0 20 20"><path d="M18.5 11H6.5C6.5 16 13 17 18 14V18C11 21 1.5 19 1.5 10.5C1.5 3 8 .5 12 1.5C17 2.5 19 6 18.5 11ZM6.5 8H14C14 4 7.500 4 6.500 8Z" fill="#0c78d6" /></svg>
    </TaskCell>
    <TaskCell>
      <svg width="18" height="21" viewBox="0 0 18 21"><path d="M1 6H17V20H1Z" fill="#fff" /><path d="M5.500 6V4C5.500 0 12.500 0 12.500 4V6" fill="none" stroke="#fff" /><path d="M5 9L8.500 8.500V12H5ZM9.500 8.400L13 8V12H9.500ZM5 13H8.500V16.500L5 16ZM9.500 13H13V17L9.500 16.600Z" fill="#111" /></svg>
    </TaskCell>
    <TaskCell>
      <svg width="20" height="20" viewBox="0 0 20 20"><path d="M1 2H8L10 4H18V18H1Z" fill="#f6d365" /><rect x="1" y="7" width="17" height="11" fill="#f2c94c" /><path d="M6 18V12H13V18H11V14H8V18Z" fill="#2d9cdb" /></svg>
    </TaskCell>
    <TaskCell>
      <svg width="20" height="20" viewBox="0 0 20 20">
        <circle cx="10" cy="10" r="9.500" fill="#db4437" />
        <path d="M10 10L19 7A9.500 9.500 0 0 1 10 19.500Z" fill="#f4c20d" />
        <path d="M10 10L10 19.500A9.500 9.500 0 0 1 1.800 5Z" fill="#0f9d58" />
        <circle cx="10" cy="10" r="4.600" fill="#fff" />
        <circle cx="10" cy="10" r="3.500" fill="#4285f4" />
      </svg>
    </TaskCell>
    <TaskCell>
      <AppTile bg="bg-[#2b579a]" letter="W" />
      <span className="absolute right-[10px] bottom-0 left-0 h-[2px] bg-[#76b9ed]" />
    </TaskCell>
    <TaskCell><AppTile bg="bg-[#7719aa]" letter="N" /></TaskCell>
    <TaskCell><AppTile bg="bg-[#d24726]" letter="P" /></TaskCell>
    <TaskCell>
      <div className="flex h-[20px] w-[20px] items-center justify-center rounded-[2px] bg-[#2d9fd8]">
        <div className="h-[13px] w-[10px] border-2 border-white" />
      </div>
    </TaskCell>
    <TaskCell className="bg-[#2a3a40]">
      <BlenderLogo s={22} />
      <span className="absolute right-0 bottom-0 left-0 h-[2px] bg-[#76b9ed]" />
    </TaskCell>
    <div className="ml-auto flex h-full items-center pr-[17px]">
      <TaskCell w="w-[40px]">
        <svg width="16" height="9" viewBox="0 0 16 9"><path d="M1 8L8 1L15 8" fill="none" stroke="#fff" strokeWidth="1.3" /></svg>
      </TaskCell>
      <TaskCell w="w-[40px]">
        <svg width="20" height="20" viewBox="0 0 20 20" fill="none" stroke="#b8b8b8" strokeWidth="1.1">
          <path d="M5 16C5 11 9 8 17 7M9 17C9 14 12 12 17 11M13 18C13 16 15 15 17 15" />
          <path d="M3 1V7M.5 2.500L5.500 5.500M5.500 2.500L.5 5.500" stroke="#fff" />
        </svg>
      </TaskCell>
      <TaskCell w="w-[40px]">
        <svg width="20" height="12" viewBox="0 0 20 12"><rect x=".7" y=".7" width="16.500" height="10.600" fill="none" stroke="#fff" strokeWidth="1.300" /><rect x="2.500" y="2.500" width="12" height="7" fill="#fff" /><rect x="18" y="4" width="1.500" height="4" fill="#fff" /></svg>
      </TaskCell>
      <TaskCell w="w-[40px]">
        <svg width="20" height="18" viewBox="0 0 20 18" fill="#ddd"><path d="M5 1L10 4L5 7L0 4ZM15 1L20 4L15 7L10 4ZM5 7L10 10L5 13L0 10ZM15 7L20 10L15 13L10 10ZM10 11L15 14L10 17L5 14Z" /></svg>
      </TaskCell>
      <TaskCell w="w-[40px]">
        <svg width="20" height="22" viewBox="0 0 20 22" fill="none" stroke="#fff" strokeWidth="1.200"><path d="M2 20C-1 16 10 3 13 2C16 1 15 5 12 9L5 17" /><path d="M12 8C16 10 18 13 18 15C18 17 15 16 13 14L9 9" /></svg>
      </TaskCell>
      <TaskCell w="w-[40px]">
        <div className="flex h-[20px] w-[30px] flex-col items-center justify-center gap-[2px] border border-white">
          <span className="h-[1px] w-[22px] border-t border-dotted border-white" />
          <span className="h-[1px] w-[22px] border-t border-dotted border-white" />
          <span className="h-[2px] w-[14px] bg-white" />
        </div>
      </TaskCell>
      <TaskCell w="w-[44px]" className="text-[14px]">ENG</TaskCell>
      <TaskCell w="w-[80px]" className="whitespace-nowrap text-[14px]">7:06 PM</TaskCell>
      <TaskCell w="w-[48px]">
        <svg width="20" height="22" viewBox="0 0 20 22"><path d="M0 0H20V18H12L10 21L8 18H0Z" fill="#fff" /><path d="M4 5H16M4 9H16M4 13H12" stroke="#111" /></svg>
      </TaskCell>
    </div>
  </div>
);

export default function App() {
  return (
    <div className="flex h-[1080px] w-[1920px] flex-col overflow-hidden bg-[#727272] text-[12.7px] [font-family:'DejaVu_Sans',sans-serif]">
      <div className="flex h-[30px] shrink-0 items-center bg-white pl-[3px] text-[14px] text-[#111] [font-family:'Noto_Sans',sans-serif]">
        <BlenderLogo s={20} />
        <span className="ml-[5px] flex-1 whitespace-nowrap">Blender* [C:\Users\m.r.bebelman\Documents\REAL INTERNAL.blend]</span>
        <div className="flex h-full items-center pr-[4px]">
          <div className="flex w-[58px] justify-center"><span className="h-px w-[11px] bg-[#333]" /></div>
          <div className="flex w-[58px] justify-center">
            <svg width="12" height="12" viewBox="0 0 12 12" fill="none" stroke="#333"><rect x=".5" y="2.500" width="9" height="9" /><path d="M2.500 2.500V.5H11.500V9.500H9.500" /></svg>
          </div>
          <div className="flex w-[58px] justify-center pr-[1px]">
            <svg width="12" height="12" viewBox="0 0 12 12" stroke="#333"><path d="M.5 .5L11.500 11.500M11.500 .5L.5 11.500" /></svg>
          </div>
        </div>
      </div>

      <div className="relative flex h-[32px] shrink-0 items-start border-b border-black bg-[#727272] pt-[5px] pl-[10px]">
        <Hatch className="absolute bottom-0 left-0" />
        <IconDrop><InfoIcon /></IconDrop>
        <Menu w="ml-[15px] w-[46px]" label="File" />
        <Menu w="w-[71px]" label="Render" />
        <Menu w="w-[76px]" label="Window" />
        <Menu w="w-[45px]" label="Help" />
        <IconDrop round="rounded-l-[5px]"><LayoutIcon /></IconDrop>
        <div className="flex h-[25px] w-[200px] shrink-0 overflow-hidden rounded-r-[5px] border border-l-0 border-[#333]">
          <div className="flex-1 bg-linear-to-b from-[#8f8f8f] to-[#b4b4b4] pl-[9px] leading-[23px] text-[#111]">Default</div>
          <div className="flex w-[26px] items-center justify-center border-l border-[#333] bg-[#7c7c7c]"><PlusIcon /></div>
          <div className="flex w-[25px] items-center justify-center border-l border-[#333] bg-[#7c7c7c]"><XIcon /></div>
        </div>
        <div className="ml-[6px]"><IconDrop round="rounded-l-[5px]"><SceneIcon /></IconDrop></div>
        <div className="flex h-[25px] w-[200px] shrink-0 overflow-hidden rounded-r-[5px] border border-l-0 border-[#333]">
          <div className="flex-1 bg-linear-to-b from-[#8f8f8f] to-[#b4b4b4] pl-[9px] leading-[23px] text-[#111]">Scene</div>
          <div className="flex w-[25px] items-center justify-center border-l border-[#333] bg-[#7c7c7c]"><PlusIcon /></div>
          <div className="flex w-[26px] items-center justify-center border-l border-[#333] bg-[#7c7c7c]"><XIcon /></div>
        </div>
        <TextDrop w="ml-[20px] w-[140px]" label="Blender Render" />
        <div className="ml-[21px] flex h-[25px] items-center"><BlenderLogo s={22} /></div>
        <span className="ml-[13px] whitespace-nowrap leading-[25px] text-[#111]">v2.79 | Verts:2,051 | Faces:1,794 | Tris:3,817 | Objects:2/59 | Lamps:0/0 | Mem:21.43M</span>
      </div>

      <div className="flex min-h-0 flex-1">
        <div className="flex w-[1520px] shrink-0 flex-col">
          <div className="flex h-[853px] shrink-0">
            <ToolShelf />
            <div className="relative w-[1320px] shrink-0 overflow-hidden">
              <Scene3D />
              <span className="absolute top-[11px] left-[24px] text-[#e8e8e8]">User Persp</span>
              <span className="absolute bottom-[8px] left-[75px] text-[#e8e8e8]">(1)</span>
              <div className="absolute top-[29px] right-[1px] flex h-[16px] w-[17px] items-center justify-center rounded-l-[4px] bg-[#464955] text-[15px] leading-none font-bold text-[#8a8a8a]">+</div>
              <Hatch className="absolute top-0 right-0 rotate-90" />
            </div>
          </div>
          <View3DHeader />
          <Timeline />
          <TimelineHeader />
        </div>
        <div className="flex w-[400px] shrink-0 flex-col border-l border-[#2c2c2c]">
          <Outliner />
          <Properties />
        </div>
      </div>

      <Taskbar />
    </div>
  );
}
